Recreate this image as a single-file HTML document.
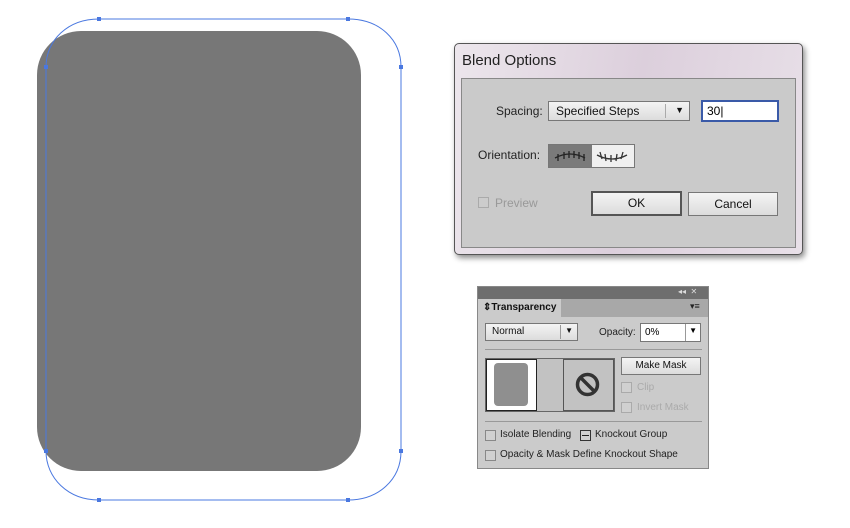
<!DOCTYPE html>
<html><head><style>
*{margin:0;padding:0;box-sizing:border-box}
body{width:850px;height:528px;background:#fff;position:relative;overflow:hidden;font-family:"Liberation Sans",sans-serif}
.a{position:absolute}
.btn{position:absolute;border:1px solid #777;background:linear-gradient(#f4f4f4,#dcdcdc);text-align:center;color:#111}
.cb{position:absolute;width:11px;height:11px;border:1px solid #888;background:#d0d0d0}
</style></head><body>
<div class="a" style="left:37px;top:31px;width:324px;height:440px;background:#777;border-radius:44px"></div>
<svg class="a" style="left:0;top:0" width="850" height="528">
<path d="M99,19 L348,19 C380,19 401,40 401,67 L401,451 C401,480 378,500 348,500 L99,500 C68,500 46,478 46,451 L46,67 C46,40 68,19 99,19 Z" fill="none" stroke="#4a78e0" stroke-width="1"/>
<g fill="#4a78e0"><rect x="97" y="17" width="4" height="4"/><rect x="346" y="17" width="4" height="4"/><rect x="399" y="65" width="4" height="4"/><rect x="399" y="449" width="4" height="4"/><rect x="97" y="498" width="4" height="4"/><rect x="346" y="498" width="4" height="4"/><rect x="44" y="65" width="4" height="4"/><rect x="44" y="449" width="4" height="4"/></g>
</svg>
<!-- Blend dialog -->
<div class="a" style="left:454px;top:43px;width:349px;height:212px;border:1px solid #555;border-radius:5px;background:linear-gradient(100deg,#ece6ec,#dccfdc 50%,#e8e0e8);box-shadow:2px 3px 6px rgba(0,0,0,.45)"></div>
<div class="a" style="left:462px;top:52px;font-size:15px;color:#222">Blend Options</div>
<div class="a" style="left:461px;top:78px;width:335px;height:170px;background:#cacaca;border:1px solid #888"></div>
<div class="a" style="left:496px;top:104px;font-size:12px;color:#222">Spacing:</div>
<div class="btn" style="left:548px;top:101px;width:142px;height:20px;text-align:left;padding:2px 7px;font-size:12px">Specified Steps<span style="position:absolute;left:116px;top:2px;height:14px;border-left:1px solid #aaa"></span><span style="position:absolute;right:5px;top:3px;font-size:9px">▼</span></div>
<div class="a" style="left:701px;top:100px;width:78px;height:22px;border:2px solid #3a5aa8;background:#fff;font-size:12px;padding:2px 4px">30|</div>
<div class="a" style="left:478px;top:148px;font-size:12px;color:#222">Orientation:</div>
<div class="a" style="left:548px;top:144px;width:87px;height:24px;border:1px solid #777;background:#f0f0f0"></div>
<div class="a" style="left:549px;top:145px;width:43px;height:22px;background:#7a7a7a"></div>
<svg class="a" style="left:548px;top:144px" width="87" height="24"><path d="M7,14 Q22,6 37,14 M10,10v7 M16,8v7 M21,7v7 M26,7v7 M31,8v7 M36,10v7" stroke="#222" fill="none" stroke-width="1.3"/><path d="M49,11 Q64,19 79,11 M52,8l2,7 M57,10l1,7 M63,11v7 M69,10l-1,7 M75,8l-2,7" stroke="#333" fill="none" stroke-width="1.3"/></svg>
<div class="cb" style="left:478px;top:197px;border-color:#aaa;background:#ccc"></div>
<div class="a" style="left:495px;top:196px;font-size:12px;color:#999">Preview</div>
<div class="btn" style="left:591px;top:191px;width:91px;height:25px;border:2px solid #555;font-size:12px;line-height:21px">OK</div>
<div class="btn" style="left:688px;top:192px;width:90px;height:24px;font-size:12px;line-height:22px">Cancel</div>
<!-- Transparency panel -->
<div class="a" style="left:477px;top:286px;width:232px;height:183px;background:#cbcbcb;border:1px solid #888"></div>
<div class="a" style="left:478px;top:287px;width:230px;height:12px;background:#6e6e6e"></div>
<div class="a" style="left:678px;top:287px;font-size:8px;color:#ddd">◂◂ &nbsp;✕</div>
<div class="a" style="left:478px;top:299px;width:230px;height:18px;background:#a8a8a8"></div>
<div class="a" style="left:478px;top:299px;width:83px;height:19px;background:#cbcbcb;font-size:10px;font-weight:bold;padding:3px 5px;color:#111">⇕Transparency</div>
<div class="a" style="left:690px;top:301px;font-size:9px;color:#222">▾≡</div>
<div class="btn" style="left:485px;top:323px;width:93px;height:18px;text-align:left;padding:2px 6px;font-size:10px">Normal<span style="position:absolute;left:74px;top:1px;height:14px;border-left:1px solid #999"></span><span style="position:absolute;right:4px;top:2px;font-size:8px">▼</span></div>
<div class="a" style="left:599px;top:327px;font-size:10px;color:#222">Opacity:</div>
<div class="a" style="left:640px;top:323px;width:61px;height:19px;border:1px solid #777;background:#fff;font-size:10px;padding:3px 4px">0%<span style="position:absolute;left:44px;top:0;height:17px;border-left:1px solid #999"></span><span style="position:absolute;right:3px;top:2px;font-size:8px">▼</span></div>
<div class="a" style="left:485px;top:349px;width:217px;border-top:1px solid #999"></div>
<div class="a" style="left:485px;top:358px;width:130px;height:54px;border:1px solid #666;background:#c2c2c2"></div>
<div class="a" style="left:486px;top:359px;width:51px;height:52px;background:#fff;border:1px solid #222"></div>
<div class="a" style="left:494px;top:363px;width:34px;height:43px;background:#8f8f8f;border-radius:4px"></div>
<div class="a" style="left:563px;top:359px;width:51px;height:52px;border:1px solid #555"></div>
<svg class="a" style="left:575px;top:372px" width="25" height="25"><circle cx="12.5" cy="12.5" r="10" stroke="#333" stroke-width="3.5" fill="none"/><line x1="5.5" y1="5.5" x2="19.5" y2="19.5" stroke="#333" stroke-width="3.5"/></svg>
<div class="btn" style="left:621px;top:357px;width:80px;height:18px;font-size:10px;line-height:16px">Make Mask</div>
<div class="cb" style="left:621px;top:382px;border-color:#aaa"></div>
<div class="a" style="left:637px;top:382px;font-size:10px;color:#aaa">Clip</div>
<div class="cb" style="left:621px;top:402px;border-color:#aaa"></div>
<div class="a" style="left:637px;top:402px;font-size:10px;color:#aaa">Invert Mask</div>
<div class="a" style="left:485px;top:421px;width:217px;border-top:1px solid #999"></div>
<div class="cb" style="left:485px;top:430px"></div>
<div class="a" style="left:500px;top:429px;font-size:10px;color:#222">Isolate Blending</div>
<div class="cb" style="left:580px;top:430px;border-color:#333"><div style="margin:4px 1px;height:1px;background:#222"></div></div>
<div class="a" style="left:595px;top:429px;font-size:10px;color:#222">Knockout Group</div>
<div class="cb" style="left:485px;top:450px"></div>
<div class="a" style="left:500px;top:449px;font-size:10px;color:#222">Opacity &amp; Mask Define Knockout Shape</div>
</body></html>
